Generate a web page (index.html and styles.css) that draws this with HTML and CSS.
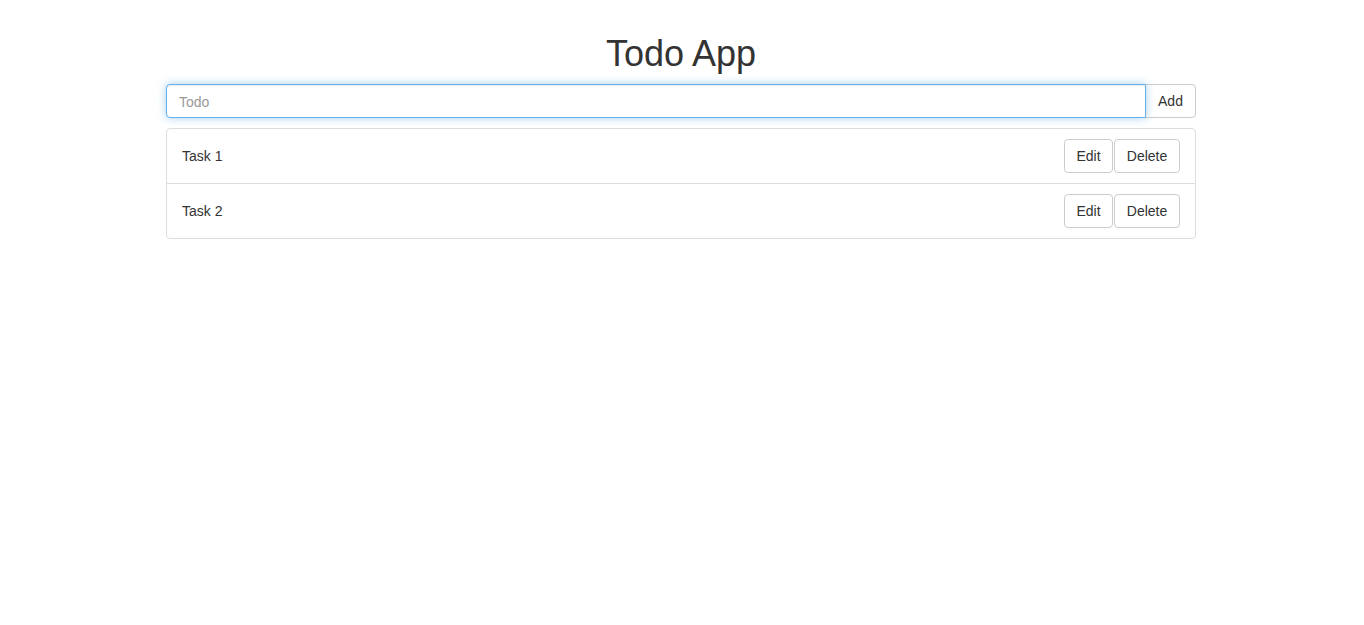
FILE: index.html
```html
<!DOCTYPE html>
<html>
<head>
<meta charset="utf-8">
<title>Todo App</title>
<link rel="stylesheet" href="styles.css">
</head>
<body>
<div class="container">
  <h1 class="title">Todo App</h1>
  <div class="input-group">
    <input class="todo-input" type="text" placeholder="Todo" autofocus>
    <button class="btn btn-add">Add</button>
  </div>
  <ul class="list">
    <li class="item">
      <span class="item-text">Task 1</span>
      <div class="actions">
        <button class="btn btn-edit">Edit</button>
        <button class="btn btn-delete">Delete</button>
      </div>
    </li>
    <li class="item">
      <span class="item-text">Task 2</span>
      <div class="actions">
        <button class="btn btn-edit">Edit</button>
        <button class="btn btn-delete">Delete</button>
      </div>
    </li>
  </ul>
</div>
</body>
</html>
```

FILE: styles.css
```css
* { box-sizing: border-box; }
html, body { margin: 0; padding: 0; background: #fff; }
body {
  font-family: "Liberation Sans", Arial, Helvetica, sans-serif;
  font-size: 14px;
  line-height: 1.42857;
  color: #333;
  padding-right: 2px;
}
.container {
  width: 1030px;
  margin: 0 auto;
  padding-top: 14px;
}
.title {
  margin: 20px 0 10px;
  font-size: 36px;
  font-weight: 500;
  line-height: 1.1;
  text-align: center;
  color: #333;
}
.input-group {
  display: flex;
  height: 34px;
}
.todo-input {
  flex: 1;
  height: 34px;
  padding: 7px 12px 5px;
  font-family: inherit;
  font-size: 14px;
  color: #555;
  border: 1px solid #66afe9;
  border-radius: 4px 0 0 4px;
  outline: 0;
  box-shadow: inset 0 1px 1px rgba(0,0,0,.075), 0 0 8px rgba(102,175,233,.6);
  position: relative;
  z-index: 2;
}
.todo-input::placeholder { color: #999; }
.btn {
  display: inline-block;
  height: 34px;
  padding: 7px 0 5px;
  font-family: inherit;
  font-size: 14px;
  line-height: 1.42857;
  text-align: center;
  color: #333;
  background: #fff;
  border: 1px solid #ccc;
  border-radius: 4px;
  cursor: pointer;
}
.btn-add {
  border-radius: 0 4px 4px 0;
  margin-left: -1px;
  width: 51px;
}
.btn-edit { width: 49px; }
.btn-delete { width: 66px; }
.list {
  list-style: none;
  margin: 10px 0 0;
  padding: 0;
}
.item {
  display: flex;
  align-items: center;
  justify-content: space-between;
  padding: 10px 15px;
  border: 1px solid #ddd;
  margin-bottom: -1px;
}
.item-text { margin-top: 2px; }
.item:first-child { border-radius: 4px 4px 0 0; }
.item:last-child { border-radius: 0 0 4px 4px; margin-bottom: 0; }
.actions {
  display: flex;
  gap: 1px;
}
```
